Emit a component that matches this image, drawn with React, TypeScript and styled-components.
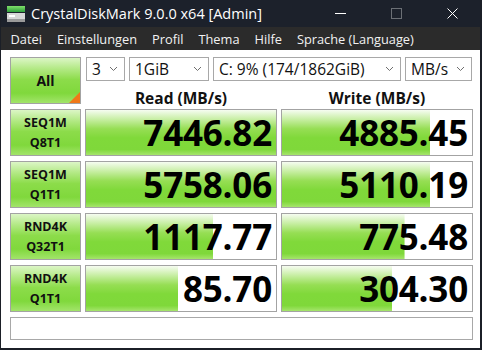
import React from "react";
import styled, { createGlobalStyle } from "styled-components";

const GlobalStyle = createGlobalStyle`
  html, body {
    margin: 0;
    padding: 0;
    background: #ffffff;
  }
  * {
    box-sizing: border-box;
  }
`;

const Window = styled.div`
  width: 482px;
  height: 350px;
  display: flex;
  flex-direction: column;
  background: #ffffff;
  border-left: 1px solid #1b1f27;
  border-right: 2px solid #1b1f27;
  border-bottom: 2px solid #1b1f27;
  font-family: "Open Sans", "Noto Sans", sans-serif;
  overflow: hidden;
`;

const TitleBar = styled.div`
  height: 27px;
  flex: none;
  display: flex;
  align-items: center;
  background: #1c212b;
  color: #ffffff;
  padding-left: 5px;
`;

const TitleText = styled.div`
  font-size: 14.5px;
  margin-left: 5px;
  flex: 1;
  white-space: nowrap;
`;

const WinButton = styled.div<{ $dim?: boolean }>`
  width: 56px;
  height: 27px;
  display: flex;
  align-items: center;
  justify-content: center;
  opacity: ${(p) => (p.$dim ? 0.35 : 1)};
`;

const MenuBar = styled.div`
  height: 23px;
  flex: none;
  display: flex;
  align-items: center;
  background: #2b2b2b;
  color: #f2f2f2;
  font-size: 12.8px;
  padding-left: 2px;
`;

const MenuItem = styled.span`
  padding: 0 7.5px;
  white-space: nowrap;
`;

const Content = styled.div`
  flex: 1;
  display: grid;
  grid-template-columns: 71px 192px 192px;
  grid-auto-rows: 47px;
  column-gap: 4px;
  row-gap: 5px;
  padding: 7px 0 0 9px;
`;

const greenCell = `
  border: 1px solid #a3a3a3;
  background: linear-gradient(
    to bottom,
    #dcf6c6 0%,
    #b6ea8a 22%,
    #8cdc4a 48%,
    #80d83c 78%,
    #a2e46a 100%
  );
`;

const LabelCell = styled.div`
  ${greenCell}
  position: relative;
  display: flex;
  flex-direction: column;
  align-items: center;
  justify-content: center;
  font-weight: 700;
  font-size: 12.5px;
  line-height: 20px;
  color: #111111;
`;

const AllLabel = styled(LabelCell)`
  font-size: 14px;
`;

const Corner = styled.div`
  position: absolute;
  right: 0;
  bottom: 0;
  width: 0;
  height: 0;
  border-left: 11px solid transparent;
  border-bottom: 11px solid #f07818;
`;

const TopArea = styled.div`
  grid-column: 2 / span 2;
  display: flex;
  flex-direction: column;
  margin-bottom: -5px;
`;

const SelectRow = styled.div`
  display: flex;
  gap: 4px;
  height: 24px;
  margin-left: 1px;
`;

const Select = styled.div<{ $w: number }>`
  width: ${(p) => p.$w}px;
  height: 24px;
  border: 1px solid #a8a8a8;
  display: flex;
  align-items: center;
  justify-content: space-between;
  padding: 0 6px 0 5px;
  font-size: 15.5px;
  color: #111111;
  white-space: nowrap;
  background: #ffffff;
`;

const HeaderRow = styled.div`
  flex: 1;
  display: grid;
  grid-template-columns: 192px 192px;
  column-gap: 4px;
  align-items: end;
`;

const Header = styled.div`
  text-align: center;
  font-weight: 700;
  font-size: 15.5px;
  color: #111111;
  line-height: 20px;
  padding-bottom: 1px;
`;

const Meter = styled.div`
  border: 1px solid #a3a3a3;
  background-color: #ffffff;
  background-image: linear-gradient(
    to bottom,
    #f6fcf1 0%,
    #c9efa6 20%,
    #96de54 42%,
    #80d93a 62%,
    #7fd83a 88%,
    #a6e56c 100%
  );
  background-repeat: no-repeat;
  display: flex;
  align-items: center;
  justify-content: flex-end;
  padding-right: 4px;
  font-weight: 700;
  font-size: 35px;
  letter-spacing: -0.2px;
  color: #000000;
  line-height: 1;
`;

const Comment = styled.div`
  grid-column: 1 / span 3;
  height: 23px;
  border: 1px solid #a8a8a8;
  background: #ffffff;
`;

const Chevron: React.FC = () => (
  <svg width="9" height="6" viewBox="0 0 9 6">
    <path d="M1 1 L4.5 4.5 L8 1" fill="none" stroke="#6e6e6e" strokeWidth="1" />
  </svg>
);

const DiskIcon: React.FC = () => (
  <svg width="20" height="18" viewBox="0 0 20 18">
    <defs>
      <linearGradient id="dg" x1="0" y1="0" x2="0" y2="1">
        <stop offset="0" stopColor="#7fe06a" />
        <stop offset="1" stopColor="#2e9e3c" />
      </linearGradient>
    </defs>
    <rect x="1" y="1" width="18" height="6" fill="url(#dg)" />
    <rect x="1" y="8" width="18" height="9" fill="#d6d6d6" />
    <rect x="1" y="14" width="18" height="3" fill="#9a9a9a" />
    <rect x="3" y="10" width="6" height="2" fill="#ffffff" />
  </svg>
);

type Row = {
  label: [string, string];
  read: string;
  readPct: number;
  write: string;
  writePct: number;
};

const rows: Row[] = [
  { label: ["SEQ1M", "Q8T1"], read: "7446.82", readPct: 100, write: "4885.45", writePct: 78 },
  { label: ["SEQ1M", "Q1T1"], read: "5758.06", readPct: 100, write: "5110.19", writePct: 78 },
  { label: ["RND4K", "Q32T1"], read: "1117.77", readPct: 67, write: "775.48", writePct: 64.5 },
  { label: ["RND4K", "Q1T1"], read: "85.70", readPct: 48.5, write: "304.30", writePct: 58 },
];

const menu = ["Datei", "Einstellungen", "Profil", "Thema", "Hilfe", "Sprache (Language)"];

export default function App() {
  return (
    <>
      <GlobalStyle />
      <Window>
        <TitleBar>
          <DiskIcon />
          <TitleText>CrystalDiskMark 9.0.0 x64 [Admin]</TitleText>
          <WinButton>
            <svg width="11" height="11" viewBox="0 0 11 11">
              <path d="M0 5.5 H11" stroke="#ffffff" strokeWidth="1" />
            </svg>
          </WinButton>
          <WinButton $dim>
            <svg width="11" height="11" viewBox="0 0 11 11">
              <rect x="0.5" y="0.5" width="10" height="10" fill="none" stroke="#ffffff" strokeWidth="1" />
            </svg>
          </WinButton>
          <WinButton>
            <svg width="11" height="11" viewBox="0 0 11 11">
              <path d="M0.5 0.5 L10.5 10.5 M10.5 0.5 L0.5 10.5" stroke="#ffffff" strokeWidth="1" />
            </svg>
          </WinButton>
        </TitleBar>
        <MenuBar>
          {menu.map((m) => (
            <MenuItem key={m}>{m}</MenuItem>
          ))}
        </MenuBar>
        <Content>
          <AllLabel>
            All
            <Corner />
          </AllLabel>
          <TopArea>
            <SelectRow>
              <Select $w={39}>
                3<Chevron />
              </Select>
              <Select $w={80}>
                1GiB<Chevron />
              </Select>
              <Select $w={188}>
                C: 9% (174/1862GiB)<Chevron />
              </Select>
              <Select $w={67}>
                MB/s<Chevron />
              </Select>
            </SelectRow>
            <HeaderRow>
              <Header>Read (MB/s)</Header>
              <Header>Write (MB/s)</Header>
            </HeaderRow>
          </TopArea>
          {rows.map((r) => (
            <React.Fragment key={r.label.join("")}>
              <LabelCell>
                <span>{r.label[0]}</span>
                <span>{r.label[1]}</span>
              </LabelCell>
              <Meter style={{ backgroundSize: `${r.readPct}% 100%` }}>{r.read}</Meter>
              <Meter style={{ backgroundSize: `${r.writePct}% 100%` }}>{r.write}</Meter>
            </React.Fragment>
          ))}
          <Comment />
        </Content>
      </Window>
    </>
  );
}
